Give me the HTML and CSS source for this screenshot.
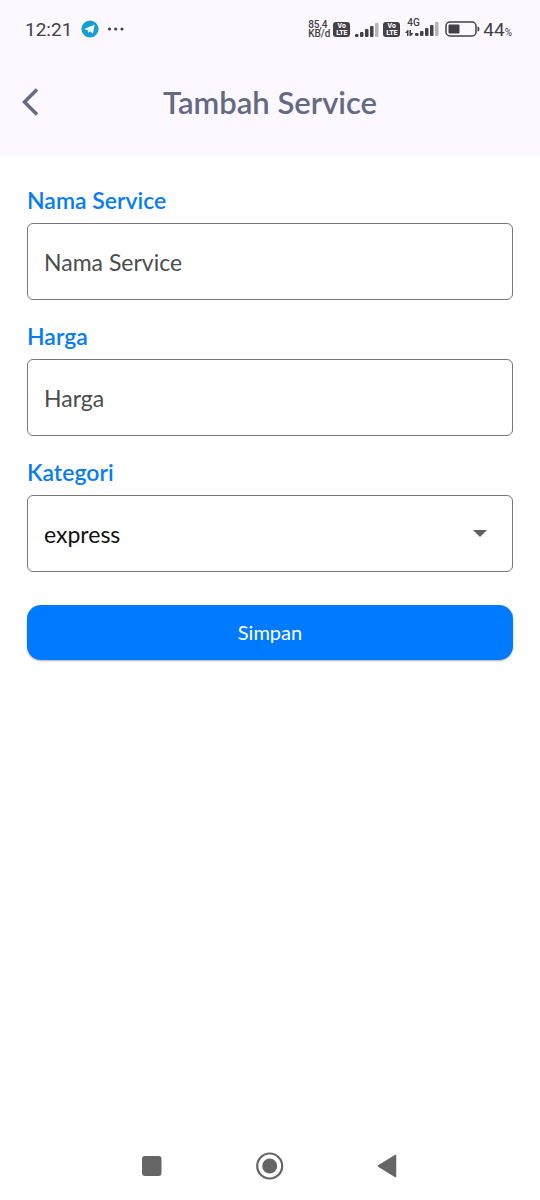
FILE: index.html
```html
<!DOCTYPE html>
<html lang="id">
<head>
<meta charset="utf-8">
<meta name="viewport" content="width=device-width, initial-scale=1">
<title>Tambah Service</title>
<link rel="stylesheet" href="styles.css">
</head>
<body>
<div class="screen">
  <div class="top">
    <div class="status">
      <span class="clock">12:21</span>
      <svg class="telegram" width="18" height="18" viewBox="0 0 18 18" aria-hidden="true"><circle cx="9" cy="9" r="8.6" fill="#159fd2"/><path d="M3.2 9 13.6 4.8 11.9 13.4 8.8 11.3 7.2 13 6.8 10.2Z" fill="#fff"/><path d="m6.8 10.2 5-3.8-4.3 4.4-.3 2.2Z" fill="#b9dff0"/></svg>
      <svg width="18" height="4" viewBox="0 0 18 4" aria-hidden="true"><g fill="#444047"><circle cx="2.500" cy="2" r="1.600"/><circle cx="8.700" cy="2" r="1.600"/><circle cx="15" cy="2" r="1.600"/></g></svg>
      <div class="status-right">
        <span class="speed">85,4<br>KB/d</span>
        <span class="volte">Vo<br>LTE</span>
        <svg class="signal" width="24" height="15" viewBox="0 0 24 15" aria-hidden="true"><g fill="#444047"><rect y="11" width="3.500" height="3" rx="1"/><rect x="5" y="9" width="3.500" height="5" rx="1"/><rect x="10" y="6" width="3.500" height="8" rx="1"/><rect x="15" y="3" width="3.500" height="11" rx="1"/></g><rect x="20" width="3.500" height="14" rx="1" fill="#b8b3ba"/></svg>
        <span class="volte">Vo<br>LTE</span>
        <span class="mobile">
          <svg width="34" height="20" viewBox="0 0 34 20" aria-hidden="true"><g fill="#444047"><path d="M0 14 2.500 11H3.500v6H2v-3ZM4.500 11H6v3h2.500l-2.500 3H4.500Z"/><rect x="10" y="14" width="3.500" height="3" rx="1"/><rect x="15" y="12" width="3.500" height="5" rx="1"/><rect x="20" y="9" width="3.500" height="8" rx="1"/><rect x="25" y="6" width="3.500" height="11" rx="1"/></g><rect x="30" y="3" width="3.500" height="14" rx="1" fill="#b8b3ba"/></svg>
          <span class="network">4G</span>
        </span>
        <svg class="battery" width="35" height="16" viewBox="0 0 35 16" aria-hidden="true"><rect x="1" y="1" width="30" height="14" rx="4" fill="none" stroke="#444047" stroke-width="1.500"/><rect x="3.500" y="3.500" width="11" height="9" rx="1" fill="#444047"/><path d="M32.500 5.500q2 0 2 2.500t-2 2.500Z" fill="#444047"/></svg>
        <span class="charge">44<small>%</small></span>
      </div>
    </div>
    <header class="appbar">
      <button class="back" type="button" aria-label="Kembali"><svg width="18" height="28" viewBox="0 0 18 28" aria-hidden="true"><path d="M15 1.500 2.500 14 15 26.500" fill="none" stroke="#626a84" stroke-width="3.500"/></svg></button>
      <h1>Tambah Service</h1>
    </header>
  </div>
  <main>
    <form class="form">
      <div class="field"><label for="nama">Nama Service</label><input id="nama" type="text" placeholder="Nama Service"></div>
      <div class="field"><label for="harga">Harga</label><input id="harga" type="text" inputmode="numeric" placeholder="Harga"></div>
      <div class="field"><label for="kategori">Kategori</label>
        <div class="select"><select id="kategori"><option>express</option></select><svg width="14" height="8" viewBox="0 0 14 8" aria-hidden="true"><path d="M0 0h14L7 7Z" fill="#5f5f5f"/></svg></div>
      </div>
      <button class="save" type="button">Simpan</button>
    </form>
  </main>
  <nav class="system">
    <button type="button" aria-label="Aplikasi terbaru"><svg width="28" height="28" viewBox="0 0 28 28"><rect x="4" y="4" width="19.500" height="20" rx="3" fill="#666"/></svg></button>
    <button type="button" aria-label="Beranda"><svg width="28" height="28" viewBox="0 0 28 28"><circle cx="13.700" cy="14" r="12.500" fill="none" stroke="#666" stroke-width="2.200"/><circle cx="13.700" cy="14" r="7.500" fill="#666"/></svg></button>
    <button type="button" aria-label="Kembali ke layar sebelumnya"><svg width="28" height="28" viewBox="0 0 28 28"><path d="M4.500 14 21.500 3.500v21Z" fill="#666" stroke="#666" stroke-width="1.500" stroke-linejoin="round"/></svg></button>
  </nav>
</div>
</body>
</html>
```
FILE: styles.css
```css
* { box-sizing: border-box; }
body { margin: 0; background: #fff; font-family: Lato, "Open Sans", sans-serif; }
button { border: 0; padding: 0; background: none; font: inherit; }
svg { display: block; flex: none; }
.screen { min-height: 100vh; display: flex; flex-direction: column; }
.top { background: #fdf7ff; }
.status { height: 58px; padding: 0 28px 0 25px; display: flex; align-items: center; color: #444047; font-family: Roboto, sans-serif; }
.clock { font-size: 19px; font-weight: 400; }
.telegram { margin: 0 8px 0 9px; }
.status-right { margin-left: auto; display: flex; align-items: center; }
.speed { font-size: 10px; line-height: 9px; font-weight: 500; margin-right: 3px; }
.volte { width: 17px; height: 15px; padding-top: 1px; border-radius: 3px; background: #444047; color: #fff; font-size: 7px; line-height: 7px; font-weight: 800; text-align: center; margin-right: 5px; }
.signal { margin-right: 4px; margin-top: 2px; }
.mobile { position: relative; margin-right: 6px; }
.network { position: absolute; left: 2px; top: -1px; font-size: 10px; line-height: 10px; font-weight: 500; }
.battery { margin-right: 3px; }
.charge { font-size: 19px; font-weight: 400; }
.charge small { font-size: 10px; }
.appbar { height: 98px; padding: 0 22px 10px; display: grid; grid-template-columns: 40px 1fr 40px; align-items: center; }
.back { height: 44px; display: flex; align-items: center; }
h1 { margin: 0; color: #626a84; font-size: 31px; line-height: 40px; font-weight: 600; text-align: center; }
main { flex: 1; padding: 30px 27px; }
.form { display: flex; flex-direction: column; gap: 22px; }
.field { display: flex; flex-direction: column; gap: 8px; }
label { color: #087cf3; font-size: 23px; line-height: 29px; font-weight: 600; }
input, select { width: 100%; height: 77px; padding: 0 16px; border: 1px solid #777; border-radius: 6px; background: #fff; color: #111; font: 23px/28px Lato, "Open Sans", sans-serif; }
input::placeholder { color: #4c4c4c; opacity: 1; }
.select { position: relative; }
select { display: block; appearance: none; }
.select svg { position: absolute; right: 26px; top: 35px; pointer-events: none; }
.save { height: 55px; margin-top: 11px; padding-bottom: 2px; border-radius: 14px; background: #007aff; color: #fff; font-size: 20px; box-shadow: 0 1px 2px rgb(0 0 0 / 30%); }
.system { height: 68px; display: flex; justify-content: center; }
.system button { width: 118px; display: flex; justify-content: center; align-items: center; }
```
